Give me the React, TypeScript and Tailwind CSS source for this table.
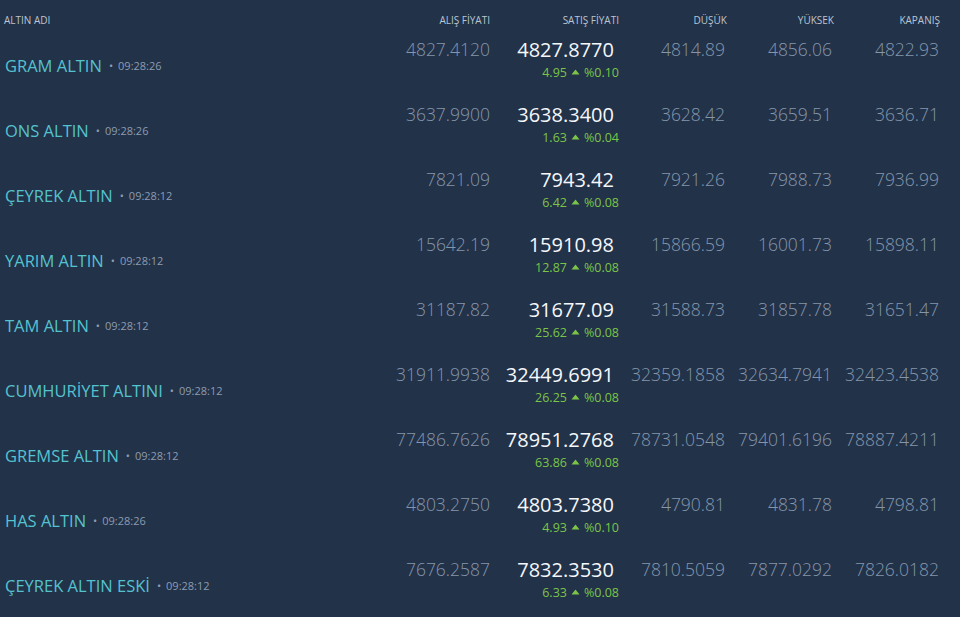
import React from 'react';

interface Row {
  name: string;
  time: string;
  alis: string;
  satis: string;
  diff: string;
  pct: string;
  dusuk: string;
  yuksek: string;
  kapanis: string;
}

const rows: Row[] = [
  { name: 'GRAM ALTIN', time: '09:28:26', alis: '4827.4120', satis: '4827.8770', diff: '4.95', pct: '%0.10', dusuk: '4814.89', yuksek: '4856.06', kapanis: '4822.93' },
  { name: 'ONS ALTIN', time: '09:28:26', alis: '3637.9900', satis: '3638.3400', diff: '1.63', pct: '%0.04', dusuk: '3628.42', yuksek: '3659.51', kapanis: '3636.71' },
  { name: 'ÇEYREK ALTIN', time: '09:28:12', alis: '7821.09', satis: '7943.42', diff: '6.42', pct: '%0.08', dusuk: '7921.26', yuksek: '7988.73', kapanis: '7936.99' },
  { name: 'YARIM ALTIN', time: '09:28:12', alis: '15642.19', satis: '15910.98', diff: '12.87', pct: '%0.08', dusuk: '15866.59', yuksek: '16001.73', kapanis: '15898.11' },
  { name: 'TAM ALTIN', time: '09:28:12', alis: '31187.82', satis: '31677.09', diff: '25.62', pct: '%0.08', dusuk: '31588.73', yuksek: '31857.78', kapanis: '31651.47' },
  { name: 'CUMHURİYET ALTINI', time: '09:28:12', alis: '31911.9938', satis: '32449.6991', diff: '26.25', pct: '%0.08', dusuk: '32359.1858', yuksek: '32634.7941', kapanis: '32423.4538' },
  { name: 'GREMSE ALTIN', time: '09:28:12', alis: '77486.7626', satis: '78951.2768', diff: '63.86', pct: '%0.08', dusuk: '78731.0548', yuksek: '79401.6196', kapanis: '78887.4211' },
  { name: 'HAS ALTIN', time: '09:28:26', alis: '4803.2750', satis: '4803.7380', diff: '4.93', pct: '%0.10', dusuk: '4790.81', yuksek: '4831.78', kapanis: '4798.81' },
  { name: 'ÇEYREK ALTIN ESKİ', time: '09:28:12', alis: '7676.2587', satis: '7832.3530', diff: '6.33', pct: '%0.08', dusuk: '7810.5059', yuksek: '7877.0292', kapanis: '7826.0182' },
];

const cols = 'grid grid-cols-[1fr_110px_129px_108px_107px_106px] pr-[20px]';

const Up = () => (
  <svg width="9" height="6" viewBox="0 0 9 6" className="mx-[4px] mb-[2px] inline-block">
    <path d="M4.5 0.5L8.5 5.5H0.5Z" fill="#7cc448" />
  </svg>
);

export default function App() {
  return (
    <div className="min-h-screen w-full bg-[#223249] font-['Open_Sans',sans-serif] overflow-hidden">
      <div className={`${cols} h-[36px] pt-[13px] text-[10px] leading-[14px] text-[#bcc5d1] uppercase`}>
        <div className="pl-[4px]">ALTIN ADI</div>
        <div className="text-right">ALIŞ FİYATI</div>
        <div className="text-right">SATIŞ FİYATI</div>
        <div className="text-right">DÜŞÜK</div>
        <div className="text-right">YÜKSEK</div>
        <div className="text-right">KAPANIŞ</div>
      </div>

      {rows.map((r) => (
        <div key={r.name} className={`${cols} h-[65px]`}>
          <div className="flex items-center pl-[5px] pb-[4px]">
            <span className="text-[16.5px] text-[#55c2cf]">{r.name}</span>
            <span className="ml-[7px] text-[11px] text-[#8d9cb0]">•</span>
            <span className="ml-[5px] text-[11px] text-[#8d9cb0]">{r.time}</span>
          </div>
          <div className="text-right pt-[1px] text-[17.5px] leading-[24px] font-light text-[#8596ab]">{r.alis}</div>
          <div className="text-right">
            <div className="pr-[5px] text-[20px] leading-[27px] text-[#f5f7fa]">{r.satis}</div>
            <div className="mt-[2px] text-[12.5px] leading-[16px] text-[#7cc448] flex items-center justify-end">
              {r.diff}
              <Up />
              {r.pct}
            </div>
          </div>
          <div className="text-right pt-[1px] pr-[2px] text-[17.5px] leading-[24px] font-light text-[#8596ab]">{r.dusuk}</div>
          <div className="text-right pt-[1px] pr-[2px] text-[17.5px] leading-[24px] font-light text-[#8596ab]">{r.yuksek}</div>
          <div className="text-right pt-[1px] pr-[1px] text-[17.5px] leading-[24px] font-light text-[#8596ab]">{r.kapanis}</div>
        </div>
      ))}
    </div>
  );
}
